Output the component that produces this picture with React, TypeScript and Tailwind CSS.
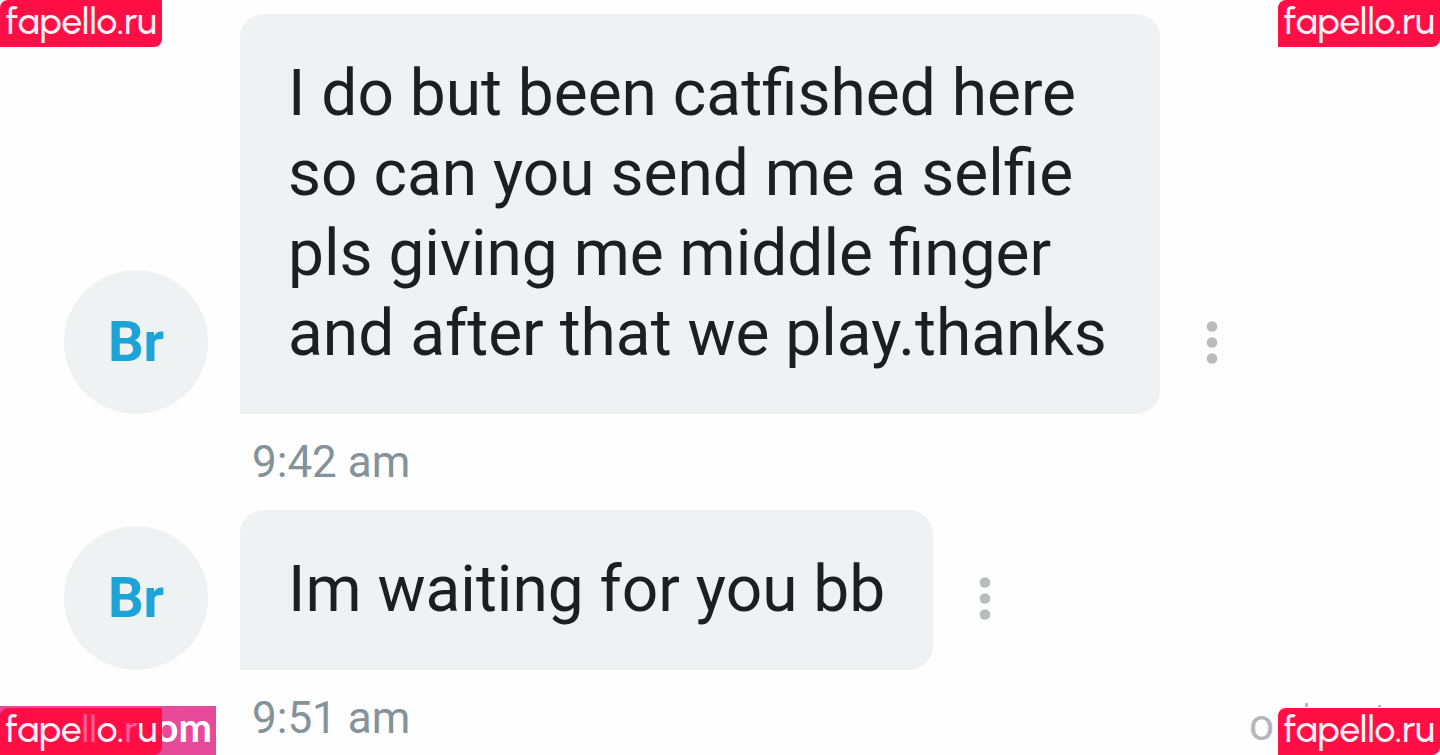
import React from 'react';

const messages = [
  {
    text: 'I do but been catfished here so can you send me a selfie pls giving me middle finger and after that we play.thanks',
    time: '9:42 am',
  },
  { text: 'Im waiting for you bb', time: '9:51 am' },
];

const Avatar = () => {
  return (
    <div className="flex size-36 shrink-0 items-center justify-center rounded-full bg-[#eef2f3] text-[56px] font-bold text-[#1ca3d8]">
      Br
    </div>
  );
}

const MoreButton = () => {
  return (
    <button type="button" aria-label="More" className="ml-4 flex h-36 w-18 shrink-0 items-center justify-center text-[#b9bcbd]">
      <svg className="h-12 w-4" viewBox="0 0 16 48" fill="currentColor" aria-hidden="true">
        <circle cx="8" cy="8.5" r="5.3" />
        <circle cx="8" cy="24.5" r="5.3" />
        <circle cx="8" cy="40.5" r="5.3" />
      </svg>
    </button>
  );
}

const Tag = ({ children }: { children: React.ReactNode }) => {
  return (
    <a href="#" className="flex h-[47px] w-[162px] items-center justify-center rounded-tl-lg rounded-br-lg bg-[#ff0f45] pb-1 font-['Urbanist','Lexend','Lato',sans-serif] text-[37px] leading-none font-medium text-[#fff0f4]">
      {children}
    </a>
  );
}

export default function App() {
  return (
    <main className="relative h-screen overflow-hidden bg-[#fefefe] pt-[14px] pl-16 font-['Roboto',sans-serif]">
      {messages.map((message) => (
        <article key={message.time}>
          <div className="flex items-end">
            <Avatar />
            <p className="ml-8 max-w-[920px] rounded-3xl rounded-bl-none bg-[#eef2f3] px-12 py-10 text-[64px] leading-[80px] text-[#1b1f20]">
              {message.text}
            </p>
            <MoreButton />
          </div>
          <time className="block pl-[188px] text-[44px] leading-[96px] text-[#84929a]">{message.time}</time>
        </article>
      ))}

      {/* Corner tags */}
      <div className="absolute top-0 left-0"><Tag>fapello.ru</Tag></div>
      <div className="absolute top-0 right-0"><Tag>fapello.ru</Tag></div>

      <div className="absolute bottom-0 left-0 flex h-[49px] w-[216px] items-center justify-end bg-[#e84a9a] pr-1 pb-2 font-['Lato',sans-serif] text-[40px] leading-none font-bold text-white">
        om
      </div>
      <div className="absolute bottom-0 left-0">
        <Tag>
          fape<span className="text-[#ff5c9a]">ll</span>o.<span className="text-[#ff5c9a]">r</span>u
        </Tag>
      </div>

      <div className="absolute right-0 bottom-0 flex items-end">
        <span className="mr-1 text-[44px] leading-[60px] text-[#b4b6b8]">o</span>
        <Tag>fapello.ru</Tag>
        <svg className="absolute top-1 right-0 h-2 w-36" viewBox="0 0 144 8" fill="#b4b6b8" aria-hidden="true">
          <path d="M9 4h3v5H9zM82 6h3v2h-3z" />
        </svg>
      </div>
    </main>
  );
}
